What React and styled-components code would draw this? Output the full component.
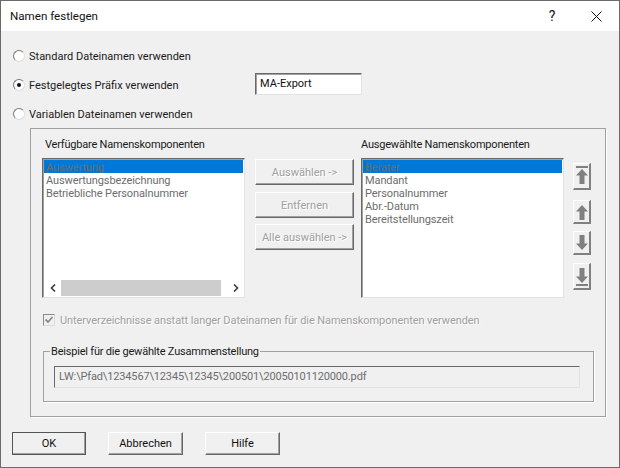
import React from "react";
import styled, { createGlobalStyle } from "styled-components";

const GlobalStyle = createGlobalStyle`
  html, body {
    margin: 0;
    padding: 0;
    background: #f0f0f0;
  }
  * {
    box-sizing: border-box;
  }
`;

const availableItems = ["Auswertung", "Auswertungsbezeichnung", "Betriebliche Personalnummer"];
const chosenItems = ["Berater", "Mandant", "Personalnummer", "Abr.-Datum", "Bereitstellungszeit"];

function ArrowIcon({ down, bar }) {
  return (
    <svg width="14" height="22" viewBox="0 0 14 22" fill="#808080">
      <g transform={down ? "rotate(180 7 11)" : undefined}>
        {bar && <rect x="1" y="1" width="12" height="2" />}
        <path d="M7 4 L13 10.5 L9.5 10.5 L9.5 19 L4.5 19 L4.5 10.5 L1 10.5 Z" />
      </g>
    </svg>
  );
}

function Chevron({ right }) {
  return (
    <svg width="8" height="8" viewBox="0 0 8 8" fill="none" stroke="#3c3c3c" strokeWidth="1.6">
      <path d={right ? "M2 0.5 L5.5 4 L2 7.5" : "M6 0.5 L2.5 4 L6 7.5"} />
    </svg>
  );
}

function CloseIcon() {
  return (
    <svg width="11" height="11" viewBox="0 0 11 11" stroke="#111" strokeWidth="1" fill="none">
      <path d="M0.5 0.5 L10.5 10.5 M10.5 0.5 L0.5 10.5" />
    </svg>
  );
}

function CheckIcon() {
  return (
    <svg width="10" height="10" viewBox="0 0 10 10" fill="none" stroke="#8a8a8a" strokeWidth="1.8">
      <path d="M1.5 4.5 L4 7 L8.5 2" />
    </svg>
  );
}

export default function App() {
  return (
    <>
      <GlobalStyle />
      <Dialog>
        <TitleBar>
          <Title>Namen festlegen</Title>
          <HelpMark>?</HelpMark>
          <CloseBox>
            <CloseIcon />
          </CloseBox>
        </TitleBar>
        <Content>
          <RadioRow>
            <Radio />
            <RadioLabel>Standard Dateinamen verwenden</RadioLabel>
          </RadioRow>
          <RadioRow>
            <Radio $checked />
            <PrefixLabel>Festgelegtes Präfix verwenden</PrefixLabel>
            <PrefixInput>MA-Export</PrefixInput>
          </RadioRow>
          <RadioRow>
            <Radio />
            <RadioLabel>Variablen Dateinamen verwenden</RadioLabel>
          </RadioRow>

          <Panel>
            <Columns>
              <ColumnLabel $inset>Verfügbare Namenskomponenten</ColumnLabel>
              <span />
              <ColumnLabel>Ausgewählte Namenskomponenten</ColumnLabel>
              <span />
              <ListBox>
                <ListItems>
                  {availableItems.map((item, i) => (
                    <ListItem key={item} $selected={i === 0}>{item}</ListItem>
                  ))}
                </ListItems>
                <ScrollBar>
                  <ScrollArrow><Chevron /></ScrollArrow>
                  <ScrollThumb />
                  <ScrollArrow $right><Chevron right /></ScrollArrow>
                </ScrollBar>
              </ListBox>
              <MiddleButtons>
                <DisabledButton>Auswählen -&gt;</DisabledButton>
                <DisabledButton>Entfernen</DisabledButton>
                <DisabledButton>Alle auswählen -&gt;</DisabledButton>
              </MiddleButtons>
              <ListBox>
                <ListItems>
                  {chosenItems.map((item, i) => (
                    <ListItem key={item} $selected={i === 0}>{item}</ListItem>
                  ))}
                </ListItems>
              </ListBox>
              <ArrowButtons>
                <ArrowButton $tall><ArrowIcon bar /></ArrowButton>
                <ArrowButton><ArrowIcon /></ArrowButton>
                <ArrowButton><ArrowIcon down /></ArrowButton>
                <ArrowButton $tall><ArrowIcon down bar /></ArrowButton>
              </ArrowButtons>
            </Columns>

            <CheckRow>
              <CheckBox><CheckIcon /></CheckBox>
              <DisabledText>Unterverzeichnisse anstatt langer Dateinamen für die Namenskomponenten verwenden</DisabledText>
            </CheckRow>

            <ExampleGroup>
              <ExampleLegend>Beispiel für die gewählte Zusammenstellung</ExampleLegend>
              <ExampleField>LW:\Pfad\1234567\12345\12345\200501\20050101120000.pdf</ExampleField>
            </ExampleGroup>
          </Panel>

          <Footer>
            <FooterButton $default>OK</FooterButton>
            <FooterButton>Abbrechen</FooterButton>
            <FooterButton>Hilfe</FooterButton>
          </Footer>
        </Content>
      </Dialog>
    </>
  );
}

const Dialog = styled.div`
  width: 620px;
  height: 468px;
  display: flex;
  flex-direction: column;
  border: 1px solid #6a6a6a;
  background: #f0f0f0;
  font-family: Roboto, "Liberation Sans", sans-serif;
  font-size: 11px;
  line-height: 14px;
  color: #1a1a1a;
`;

const TitleBar = styled.div`
  height: 30px;
  display: flex;
  align-items: center;
  padding: 0 17px 0 9px;
  background: #fff;
`;

const Title = styled.div`
  flex: 1;
  font-size: 11.6px;
  color: #111;
`;

const HelpMark = styled.div`
  width: 12px;
  margin-right: 33px;
  font-size: 14px;
  text-align: center;
  color: #111;
`;

const CloseBox = styled.div`
  display: flex;
`;

const Content = styled.div`
  flex: 1;
  padding-top: 10px;
`;

const RadioRow = styled.div`
  height: 29px;
  display: flex;
  align-items: center;
  padding-left: 12px;
`;

const Radio = styled.span`
  position: relative;
  width: 12px;
  height: 12px;
  margin-right: 4px;
  flex: none;
  border-radius: 50%;
  background: #fff;
  border: 1px solid;
  border-color: #777 #ddd #ddd #777;

  &::after {
    content: "";
    display: ${(p) => (p.$checked ? "block" : "none")};
    position: absolute;
    left: 3px;
    top: 3px;
    width: 4px;
    height: 4px;
    border-radius: 50%;
    background: #111;
  }
`;

const RadioLabel = styled.span`
  padding-top: 2px;
`;

const PrefixLabel = styled.span`
  width: 226px;
  padding-top: 2px;
`;

const PrefixInput = styled.div`
  width: 107px;
  height: 22px;
  margin-bottom: 2px;
  padding: 3px 4px;
  background: #fff;
  border: 1px solid;
  border-color: #696969 #e3e3e3 #e3e3e3 #696969;
  box-shadow: inset 1px 1px 0 #a0a0a0;
  color: #111;
`;

const Panel = styled.div`
  width: 576px;
  height: 289px;
  margin-left: 29px;
  padding: 8px 11px 0;
  border: 1px solid #a0a0a0;
  box-shadow: 1px 1px 0 #fff;
`;

const Columns = styled.div`
  display: grid;
  grid-template-columns: 203px 116px 203px 27px;
  grid-template-rows: 14px 140px;
  row-gap: 7px;
`;

const ColumnLabel = styled.div`
  padding: 1px 0 0 ${(p) => (p.$inset ? "3px" : "0")};
  letter-spacing: -0.2px;
  white-space: nowrap;
`;

const ListBox = styled.div`
  display: flex;
  flex-direction: column;
  padding: 1px;
  background: #fff;
  border: 1px solid;
  border-color: #696969 #e3e3e3 #e3e3e3 #696969;
  box-shadow: inset 1px 1px 0 #a0a0a0;
`;

const ListItems = styled.div`
  flex: 1;
`;

const ListItem = styled.div`
  height: 13px;
  padding: 1px 0 0 2px;
  line-height: 13px;
  letter-spacing: -0.1px;
  white-space: nowrap;
  color: #6d6d6d;
  background: ${(p) => (p.$selected ? "#0078d7" : "transparent")};
`;

const ScrollBar = styled.div`
  height: 17px;
  display: flex;
  align-items: center;
  background: #fff;
`;

const ScrollArrow = styled.div`
  width: ${(p) => (p.$right ? "15px" : "17px")};
  display: flex;
  justify-content: center;
`;

const ScrollThumb = styled.div`
  flex: 1;
  height: 16px;
  margin-right: 7px;
  background: #cdcdcd;
`;

const MiddleButtons = styled.div`
  display: flex;
  flex-direction: column;
  gap: 7px;
  padding: 1px 7px 0 10px;
`;

const DisabledButton = styled.div`
  height: 26px;
  padding-top: 2px;
  display: flex;
  align-items: center;
  justify-content: center;
  background: #f0f0f0;
  border: 1px solid;
  border-color: #fff #696969 #696969 #fff;
  box-shadow: inset -1px -1px 0 #a0a0a0;
  color: #a0a0a0;
  text-shadow: 1px 1px 0 #fff;

  &:last-child {
    margin-top: -1px;
  }
`;

const ArrowButtons = styled.div`
  display: flex;
  flex-direction: column;
  padding: 5px 0 0 9px;
  gap: 7px;
`;

const ArrowButton = styled.div`
  width: 18px;
  height: ${(p) => (p.$tall ? "27px" : "24px")};
  display: flex;
  align-items: center;
  justify-content: center;
  background: #f0f0f0;
  border-style: solid;
  border-width: 1px 2px 2px 1px;
  border-color: #fff #808080 #808080 #fff;

  &:nth-child(2) {
    margin-top: 3px;
  }
  &:nth-child(4) {
    margin-top: 1px;
  }
`;

const CheckRow = styled.div`
  height: 20px;
  margin-top: 12px;
  display: flex;
  align-items: center;
  padding-left: 1px;
  gap: 5px;
`;

const CheckBox = styled.span`
  width: 12px;
  height: 12px;
  flex: none;
  display: flex;
  align-items: center;
  justify-content: center;
  background: #f0f0f0;
  border: 1px solid;
  border-color: #8a8a8a #dcdcdc #dcdcdc #8a8a8a;
`;

const DisabledText = styled.span`
  padding-top: 2px;
  letter-spacing: -0.08px;
  color: #a0a0a0;
  text-shadow: 1px 1px 0 #fff;
`;

const ExampleGroup = styled.fieldset`
  margin: 13px 0 0 1px;
  width: 551px;
  height: 59px;
  padding: 7px 13px 0 10px;
  border: 1px solid #a0a0a0;
  box-shadow: 1px 1px 0 #fff;
`;

const ExampleLegend = styled.legend`
  padding: 2px 1px 0;
  margin-left: -4px;
  line-height: 14px;
  letter-spacing: -0.2px;
`;

const ExampleField = styled.div`
  height: 22px;
  padding: 3px 4px;
  background: #f0f0f0;
  border: 1px solid;
  border-color: #696969 #e3e3e3 #e3e3e3 #696969;
  letter-spacing: -0.15px;
  color: #6d6d6d;
`;

const Footer = styled.div`
  display: flex;
  gap: 22px;
  padding: 15px 0 0 11px;
`;

const FooterButton = styled.div`
  width: ${(p) => (p.$default ? "74px" : "75px")};
  height: 23px;
  display: flex;
  align-items: center;
  justify-content: center;
  background: #f0f0f0;
  border: 1px solid;
  border-color: ${(p) => (p.$default ? "#555" : "#fff #696969 #696969 #fff")};
  box-shadow: inset -1px -1px 0 #a0a0a0;
  color: #111;
`;
